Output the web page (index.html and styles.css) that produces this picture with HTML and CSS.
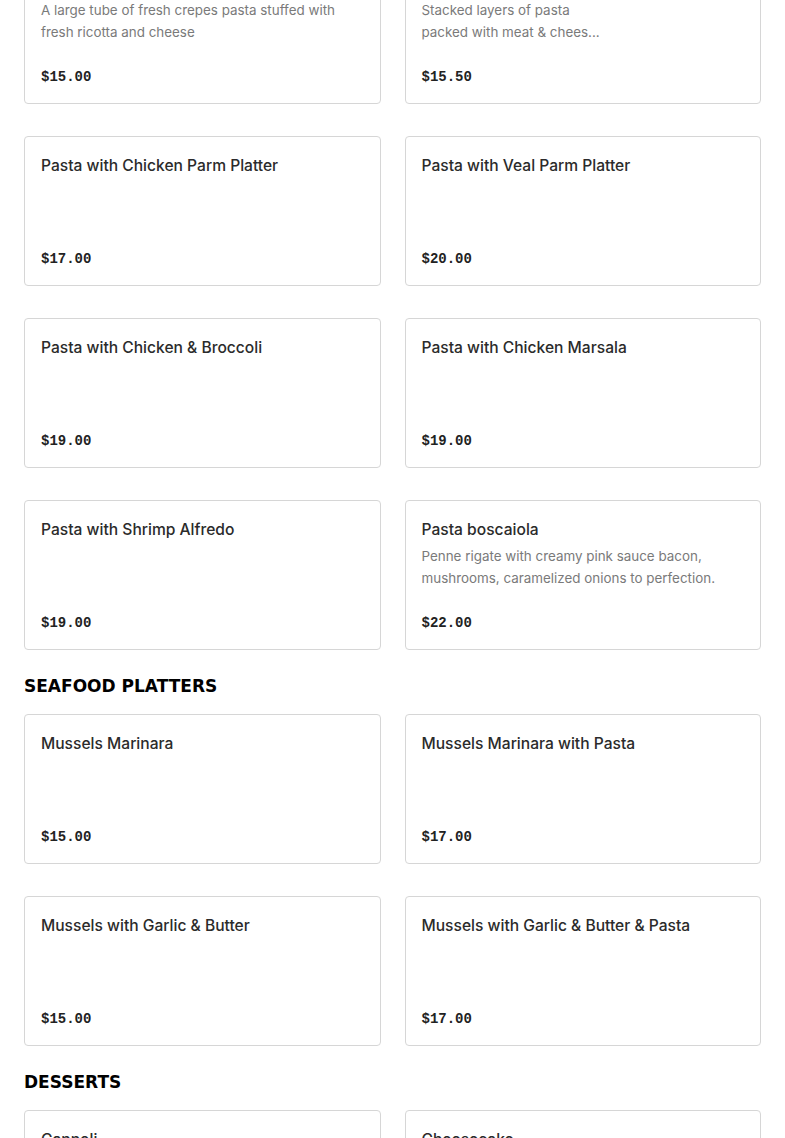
FILE: index.html
```html
<!DOCTYPE html>
<html>
<head>
<meta charset="utf-8">
<link rel="stylesheet" href="styles.css">
</head>
<body>
<div class="page">
  <div class="grid">
    <div class="card">
      <div class="title">Manicotti</div>
      <div class="desc">A large tube of fresh crepes pasta stuffed with fresh ricotta and cheese</div>
      <div class="price">$15.00</div>
    </div>
    <div class="card">
      <div class="title">Lasagna</div>
      <div class="desc">Stacked layers of pasta<br>packed with meat &amp; chees...</div>
      <div class="price">$15.50</div>
    </div>
    <div class="card">
      <div class="title">Pasta with Chicken Parm Platter</div>
      <div class="price">$17.00</div>
    </div>
    <div class="card">
      <div class="title">Pasta with Veal Parm Platter</div>
      <div class="price">$20.00</div>
    </div>
    <div class="card">
      <div class="title">Pasta with Chicken &amp; Broccoli</div>
      <div class="price">$19.00</div>
    </div>
    <div class="card">
      <div class="title">Pasta with Chicken Marsala</div>
      <div class="price">$19.00</div>
    </div>
    <div class="card">
      <div class="title">Pasta with Shrimp Alfredo</div>
      <div class="price">$19.00</div>
    </div>
    <div class="card">
      <div class="title">Pasta boscaiola</div>
      <div class="desc">Penne rigate with creamy pink sauce bacon, mushrooms, caramelized onions to perfection.</div>
      <div class="price">$22.00</div>
    </div>
  </div>

  <h2 class="section">SEAFOOD PLATTERS</h2>
  <div class="grid">
    <div class="card">
      <div class="title">Mussels Marinara</div>
      <div class="price">$15.00</div>
    </div>
    <div class="card">
      <div class="title">Mussels Marinara with Pasta</div>
      <div class="price">$17.00</div>
    </div>
    <div class="card">
      <div class="title">Mussels with Garlic &amp; Butter</div>
      <div class="price">$15.00</div>
    </div>
    <div class="card">
      <div class="title">Mussels with Garlic &amp; Butter &amp; Pasta</div>
      <div class="price">$17.00</div>
    </div>
  </div>

  <h2 class="section">DESSERTS</h2>
  <div class="grid">
    <div class="card">
      <div class="title">Cannoli</div>
      <div class="price">$5.00</div>
    </div>
    <div class="card">
      <div class="title">Cheesecake</div>
      <div class="price">$6.00</div>
    </div>
  </div>
</div>
</body>
</html>
```

FILE: styles.css
```css
html, body {
  margin: 0;
  padding: 0;
  background: #ffffff;
}
body {
  overflow: hidden;
  font-family: Inter, "Noto Sans", sans-serif;
  color: #2a2a2a;
}
.page {
  margin-top: -46px;
  padding: 0 24px;
}
.grid {
  display: grid;
  grid-template-columns: 1fr 1fr;
  column-gap: 24px;
  row-gap: 32px;
}
.card {
  box-sizing: border-box;
  height: 150px;
  border: 1px solid #d6d6d6;
  border-radius: 4px;
  padding: 16px 16px 15px 16px;
  display: flex;
  flex-direction: column;
}
.title {
  font-size: 15.6px;
  font-weight: 500;
  line-height: 26px;
  color: #2b2b2b;
}
.desc {
  margin-top: 2px;
  font-size: 13.4px;
  line-height: 22px;
  color: #7a7a7a;
}
.price {
  margin-top: auto;
  font-family: "Liberation Mono", monospace;
  font-weight: bold;
  font-size: 14px;
  line-height: 22px;
  color: #222;
}
.section {
  margin: 25px 0 17px 0;
  font-family: "DejaVu Sans", Verdana, sans-serif;
  font-weight: bold;
  font-size: 17px;
  line-height: 22px;
  color: #000;
}
```
